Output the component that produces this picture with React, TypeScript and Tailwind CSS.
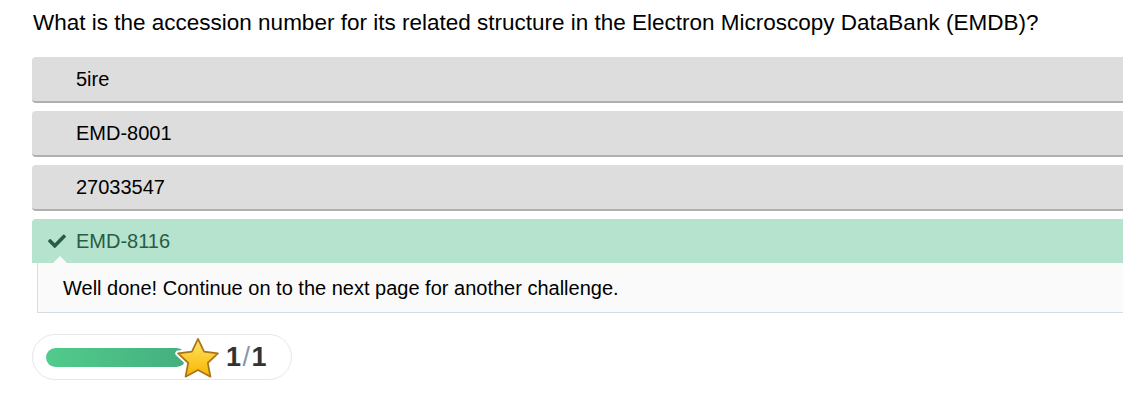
import { useMemo } from "react";

type Option = { label: string; correct?: boolean };

const options: Option[] = [
	{ label: "5ire" },
	{ label: "EMD-8001" },
	{ label: "27033547" },
	{ label: "EMD-8116", correct: true },
];

export default function App() {
	const answered = useMemo(() => options.findIndex(o => o.correct), []);

	return (
		<div className="w-[1123px] h-[400px] overflow-hidden bg-white font-['Liberation_Sans',Arial,sans-serif] text-black">
			<div className="pl-8 pt-[9px] w-[1200px]">
				<h2 className="pl-px text-[22.5px] leading-[27px] mb-[21px]">
					What is the accession number for its related structure in the Electron Microscopy DataBank (EMDB)?
				</h2>

				<div className="flex flex-col gap-2">
					{options.map((o, i) =>
						o.correct ? (
							<div key={o.label}>
								<div className="h-[44px] rounded-t-[4px] bg-[#b5e3ce] flex items-center pl-4 text-[20px] text-[#285c45]">
									<CheckIcon />
									<span className="ml-[10px]">{o.label}</span>
								</div>
								<div className="relative ml-[5px] h-[50px] bg-[#fafafa] border-l border-b border-[#d4dde4] flex items-center pl-[25px] text-[20px]">
									<span className="absolute -top-[7px] left-[15px] w-0 h-0 border-l-[7px] border-r-[7px] border-b-[7px] border-l-transparent border-r-transparent border-b-[#fafafa]" />
									Well done! Continue on to the next page for another challenge.
								</div>
							</div>
						) : (
							<div
								key={o.label}
								className={`h-[46px] rounded-[4px] bg-[#dddddd] border-b-2 border-[#b0b0b0] flex items-center pl-11 text-[20px] ${i === answered ? "" : ""}`}
							>
								{o.label}
							</div>
						),
					)}
				</div>

				<div className="mt-[21px] w-[260px] h-[46px] rounded-full border border-[#e6e6e6] flex items-center pl-[13px]">
					<div className="relative w-[140px] h-[19px]">
						<div className="absolute inset-0 rounded-full bg-gradient-to-r from-[#52cb8c] to-[#44af7e]" />
						<div className="absolute left-[128px] -top-[13px] w-[48px] h-[48px]">
							<Star />
						</div>
					</div>
					<div className="ml-[40px] text-[27px] leading-none font-bold text-[#333] tracking-[1.5px]">
						1<span className="text-[#8796a8] font-normal">/</span>1
					</div>
				</div>
			</div>
		</div>
	);
}

function CheckIcon() {
	return (
		<svg width="18" height="14" viewBox="0 0 512 400" fill="#285c45">
			<path d="M173.9 389.4L7.5 223c-10-10-10-26.2 0-36.2l36.2-36.2c10-10 26.2-10 36.2 0L192 262.7 432.1 22.6c10-10 26.2-10 36.2 0l36.2 36.2c10 10 10 26.2 0 36.2L210.1 389.4c-10 10-26.2 10-36.2 0z" />
		</svg>
	);
}

function Star() {
	const d = "M22 3.5 L27.6 15.2 L40.3 16.8 L31 25.6 L33.4 38.2 L22 32 L10.6 38.2 L13 25.6 L3.7 16.8 L16.4 15.2 Z";
	return (
		<svg width="48" height="48" viewBox="0 0 44 44">
			<defs>
				<linearGradient id="starFill" x1="0" y1="0" x2="0" y2="1">
					<stop offset="0" stopColor="#ffe566" />
					<stop offset="1" stopColor="#f7b500" />
				</linearGradient>
			</defs>
			<path d={d} fill="white" stroke="white" strokeWidth="5" strokeLinejoin="round" />
			<path d={d} fill="url(#starFill)" stroke="#a8741a" strokeWidth="1.6" strokeLinejoin="round" />
		</svg>
	);
}
